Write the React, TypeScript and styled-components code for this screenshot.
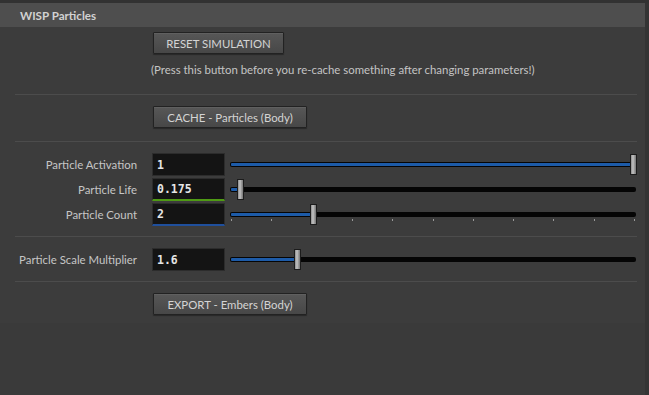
import styled, { createGlobalStyle } from 'styled-components'

const GlobalStyle = createGlobalStyle`
  html, body {
    margin: 0;
    padding: 0;
    background: #3a3a3a;
  }
  body {
    font-family: Lato, 'Noto Sans', sans-serif;
    font-size: 11.4px;
    color: #c8c8c8;
  }
`

const Page = styled.div`
  width: 649px;
  height: 395px;
  display: flex;
  flex-direction: column;
  background: #3a3a3a;
  overflow: hidden;
`
const TopStrip = styled.div`
  height: 3px;
  background: #323232;
  flex: none;
`
const Frame = styled.div`
  flex: 1;
  display: flex;
`
const Main = styled.div`
  flex: 1;
`
const SideStrip = styled.div`
  width: 4px;
  background: #343434;
`
const Panel = styled.div`
  background: #3c3c3c;
`
const Header = styled.div`
  height: 24px;
  display: flex;
  align-items: center;
  padding-left: 20px;
  background: #4e4e4e;
  font-weight: 700;
  font-size: 11.6px;
  color: #d2d2d2;
`
const Body = styled.div`
  padding: 5px 0 8px 15px;
`
const ButtonRow = styled.div<{ top?: number }>`
  display: flex;
  padding-left: 138px;
  margin-top: ${(p) => p.top ?? 0}px;
`
const Button = styled.div<{ width: number }>`
  width: ${(p) => p.width}px;
  height: 22px;
  box-sizing: border-box;
  display: flex;
  align-items: center;
  justify-content: center;
  border: 1px solid #222;
  border-radius: 1px;
  background: linear-gradient(to bottom, #575757, #474747);
  box-shadow: 0 1px 1px rgba(0, 0, 0, 0.35), inset 0 1px 0 rgba(255, 255, 255, 0.06);
  color: #d4d4d4;
`
const Note = styled.div`
  padding-left: 136px;
  margin-top: 8px;
  line-height: 16px;
  color: #c4c4c4;
`
const Divider = styled.div<{ top: number }>`
  height: 1px;
  width: 622px;
  background: #4c4c4c;
  margin-top: ${(p) => p.top}px;
`
const Rows = styled.div<{ top: number }>`
  display: flex;
  flex-direction: column;
  gap: 2px;
  margin-top: ${(p) => p.top}px;
`
const Row = styled.div`
  display: grid;
  grid-template-columns: 137px 73px 1fr;
  align-items: center;
  height: 23px;
`
const Label = styled.div`
  text-align: right;
  padding-right: 15px;
  color: #c6c6c6;
  white-space: nowrap;
`
const Field = styled.div<{ accent?: string }>`
  height: 23px;
  box-sizing: border-box;
  border: 1px solid #2c2c2c;
  border-bottom: ${(p) => (p.accent ? `2px solid ${p.accent}` : '1px solid #2c2c2c')};
  background: #141414;
  display: flex;
  align-items: center;
  padding-left: 4px;
  font-family: 'DejaVu Sans Mono', monospace;
  font-weight: 700;
  font-size: 11.5px;
  color: #e6e6e6;
`
const SliderWrap = styled.div`
  position: relative;
  margin-left: 5px;
  width: 406px;
  height: 23px;
`
const Track = styled.div`
  position: absolute;
  left: 0;
  right: 0;
  top: 9px;
  height: 5px;
  border-radius: 2px;
  background: #050505;
`
const Fill = styled.div`
  position: absolute;
  left: 1px;
  top: 1px;
  height: 3px;
  border-radius: 1px;
  background: #1d5ba8;
`
const Handle = styled.div`
  position: absolute;
  top: 1px;
  width: 7px;
  height: 21px;
  box-sizing: border-box;
  border: 1px solid #1c1c1c;
  background: linear-gradient(to right, #8c8c8c, #c4c4c4 40%, #9a9a9a 70%, #777);
`
const Tick = styled.div`
  position: absolute;
  top: 16px;
  width: 1px;
  height: 2px;
  background: #9a9a9a;
`

function Slider(props: { value: number; ticks?: number }) {
  const width = 406
  const pos = Math.round(props.value * (width - 6))
  const ticks = props.ticks ? Array.from({ length: props.ticks + 1 }, (_, i) => i) : []
  return (
    <SliderWrap>
      <Track>
        <Fill style={{ width: Math.max(pos, 4) }} />
      </Track>
      {ticks.map((i) => (
        <Tick key={i} style={{ left: Math.round((i * (width - 3)) / props.ticks!) + 1 }} />
      ))}
      <Handle style={{ left: pos }} />
    </SliderWrap>
  )
}

function ParamRow(props: { label: string; value: string; accent?: string; slider: number; ticks?: number }) {
  return (
    <Row>
      <Label>{props.label}</Label>
      <Field accent={props.accent}>{props.value}</Field>
      <Slider value={props.slider} ticks={props.ticks} />
    </Row>
  )
}

export default function App() {
  return (
    <Page>
      <GlobalStyle />
      <TopStrip />
      <Frame>
        <Main>
          <Panel>
            <Header>WISP Particles</Header>
            <Body>
              <ButtonRow>
                <Button width={131}>RESET SIMULATION</Button>
              </ButtonRow>
              <Note>(Press this button before you re-cache something after changing parameters!)</Note>
              <Divider top={16} />
              <ButtonRow top={11}>
                <Button width={154}>CACHE - Particles (Body)</Button>
              </ButtonRow>
              <Divider top={13} />
              <Rows top={11}>
                <ParamRow label="Particle Activation" value="1" slider={1} />
                <ParamRow label="Particle Life" value="0.175" accent="#4f9a14" slider={0.018} />
                <ParamRow label="Particle Count" value="2" accent="#1f4f9c" slider={0.2} ticks={10} />
              </Rows>
              <Divider top={10} />
              <Rows top={11}>
                <ParamRow label="Particle Scale Multiplier" value="1.6" slider={0.16} />
              </Rows>
              <Divider top={10} />
              <ButtonRow top={11}>
                <Button width={154}>EXPORT - Embers (Body)</Button>
              </ButtonRow>
            </Body>
          </Panel>
        </Main>
        <SideStrip />
      </Frame>
    </Page>
  )
}
